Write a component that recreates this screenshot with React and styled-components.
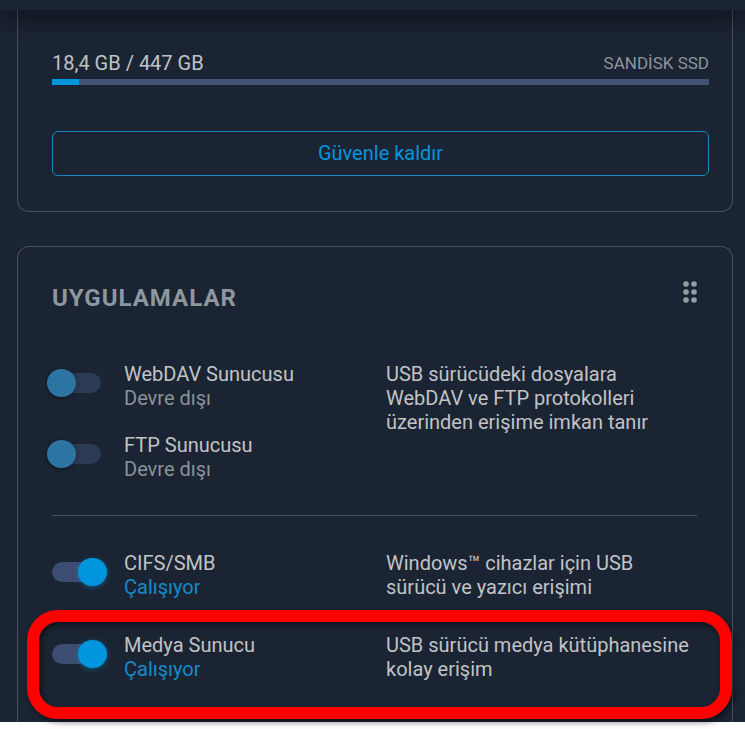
import React, { useState } from 'react';
import styled, { createGlobalStyle } from 'styled-components';

const GlobalStyle = createGlobalStyle`
  * {
    box-sizing: border-box;
  }

  body {
    margin: 0;
    background: #ffffff;
    font-family: Roboto, 'Noto Sans', sans-serif;
    font-size: 20px;
    line-height: 24px;
    color: #c1c3c6;
  }
`;

const Page = styled.div`
  background: #1b2433;
  margin-bottom: 7px;
`;

const TopBar = styled.header`
  position: relative;
  z-index: 1;
  height: 10px;
  background: #1b2434;
  box-shadow: 0 4px 24px rgba(0, 0, 0, 0.9);
`;

const Content = styled.main`
  display: flex;
  flex-direction: column;
  gap: 34px;
  padding: 0 12px 0 17px;
`;

const Card = styled.section`
  border: 1px solid #4a505b;
  border-radius: ${({ $open }) => ($open === 'top' ? '0 0 12px 12px' : '12px 12px 0 0')};
  border-top-width: ${({ $open }) => ($open === 'top' ? '0' : '1px')};
  border-bottom-width: ${({ $open }) => ($open === 'bottom' ? '0' : '1px')};
  padding: ${({ $open }) => ($open === 'top' ? '41px 23px 35px 34px' : '34px 23px 41px 34px')};
`;

const DiskHeader = styled.div`
  display: flex;
  justify-content: space-between;
  align-items: center;
  padding-bottom: 4px;
`;

const DiskName = styled.span`
  font-size: 17px;
  color: #8e959c;
`;

const Bar = styled.div`
  height: 6px;
  background: #415275;
`;

const BarFill = styled.div`
  height: 100%;
  background: #0096dc;
`;

const EjectButton = styled.button`
  width: 100%;
  height: 45px;
  margin-top: 46px;
  padding: 0 0 2px;
  border: 1px solid #1b86bd;
  border-radius: 6px;
  background: transparent;
  color: #0096dc;
  font: inherit;
  cursor: pointer;
`;

const CardHeader = styled.div`
  display: flex;
  justify-content: space-between;
  align-items: flex-start;
  padding-right: 12px;
`;

const Title = styled.h2`
  margin: 0;
  padding-top: 4px;
  font-size: 24px;
  line-height: 26px;
  font-weight: 700;
  letter-spacing: 1px;
  color: #8e979e;
`;

const DragHandle = styled.button`
  display: flex;
  padding: 0;
  border: 0;
  background: transparent;
  color: #969ea4;
  cursor: grab;
`;

const AppGroup = styled.div`
  position: relative;
  display: grid;
  grid-template-columns: 334fr 311fr;
  margin: ${({ $spaced }) => ($spaced ? '34px' : '0')} 12px 0 0;
`;

const AppList = styled.div`
  display: flex;
  flex-direction: column;
  gap: 23px;
`;

const AppRow = styled.div`
  display: flex;
  gap: 23px;
`;

const Switch = styled.input`
  appearance: none;
  flex: none;
  width: 49px;
  height: 20px;
  margin: 11px 0 0;
  border-radius: 10px;
  background: #2b3a55;
  cursor: pointer;

  &::before {
    content: '';
    display: block;
    width: 29px;
    height: 28px;
    margin: -4px 0 0 -5px;
    border-radius: 50%;
    background: #2c75a3;
    box-shadow: 0 1px 5px rgba(0, 0, 0, 0.4);
  }

  &:checked {
    background: #3d4d71;
  }

  &:checked::before {
    margin-left: 26px;
    background: #0096de;
    box-shadow: 0 1px 5px rgba(0, 150, 222, 0.5);
  }
`;

const AppLabel = styled.label`
  display: flex;
  flex-direction: column;
  cursor: pointer;
`;

const Status = styled.span`
  color: ${({ $on }) => ($on ? '#168bca' : '#8b9298')};
`;

const Description = styled.p`
  margin: 0;
`;

const Divider = styled.hr`
  height: 1px;
  margin: 34px 12px 35px 0;
  border: 0;
  background: #4a505b;
`;

const Highlight = styled.div`
  position: absolute;
  inset: -23px -35px -38px -25px;
  border: 12px solid #ff0000;
  border-radius: 31px;
  box-shadow: 2px 3px 6px rgba(0, 0, 0, 0.5), inset 2px 3px 6px rgba(0, 0, 0, 0.5);
  pointer-events: none;
`;

const Apps = styled.div`
  padding-top: 51px;
`;

const AppSwitch = ({ id, name, defaultOn = false }) => {
  const [on, setOn] = useState(defaultOn);

  return (
    <AppRow>
      <Switch type="checkbox" id={id} checked={on} onChange={() => setOn(!on)} />
      <AppLabel htmlFor={id}>
        <span>{name}</span>
        <Status $on={on}>{on ? 'Çalışıyor' : 'Devre dışı'}</Status>
      </AppLabel>
    </AppRow>
  );
};

const DotsIcon = () => (
  <svg width="14" height="22" viewBox="0 0 14 22" fill="currentColor">
    {[3, 11, 19].map((y) => (
      <React.Fragment key={y}>
        <circle cx="3" cy={y} r="2.8" />
        <circle cx="11" cy={y} r="2.8" />
      </React.Fragment>
    ))}
  </svg>
);

const App = () => {
  const used = 18.4;
  const total = 447;

  return (
    <>
      <GlobalStyle />
      <Page>
        <TopBar />
        <Content>
          <Card $open="top">
            <DiskHeader>
              <span>18,4 GB / 447 GB</span>
              <DiskName>SANDİSK SSD</DiskName>
            </DiskHeader>
            <Bar>
              <BarFill style={{ width: `${(used / total) * 100}%` }} />
            </Bar>
            <EjectButton type="button">Güvenle kaldır</EjectButton>
          </Card>

          <Card $open="bottom">
            <CardHeader>
              <Title>UYGULAMALAR</Title>
              <DragHandle type="button" aria-label="Taşı">
                <DotsIcon />
              </DragHandle>
            </CardHeader>
            <Apps>
              <AppGroup>
                <AppList>
                  <AppSwitch id="webdav" name="WebDAV Sunucusu" />
                  <AppSwitch id="ftp" name="FTP Sunucusu" />
                </AppList>
                <Description>
                  USB sürücüdeki dosyalara WebDAV ve FTP protokolleri üzerinden erişime imkan tanır
                </Description>
              </AppGroup>
              <Divider />
              <AppGroup>
                <AppSwitch id="cifs" name="CIFS/SMB" defaultOn />
                <Description>Windows™ cihazlar için USB sürücü ve yazıcı erişimi</Description>
              </AppGroup>
              <AppGroup $spaced>
                <AppSwitch id="media" name="Medya Sunucu" defaultOn />
                <Description>USB sürücü medya kütüphanesine kolay erişim</Description>
                <Highlight />
              </AppGroup>
            </Apps>
          </Card>
        </Content>
      </Page>
    </>
  );
};

export default App;
